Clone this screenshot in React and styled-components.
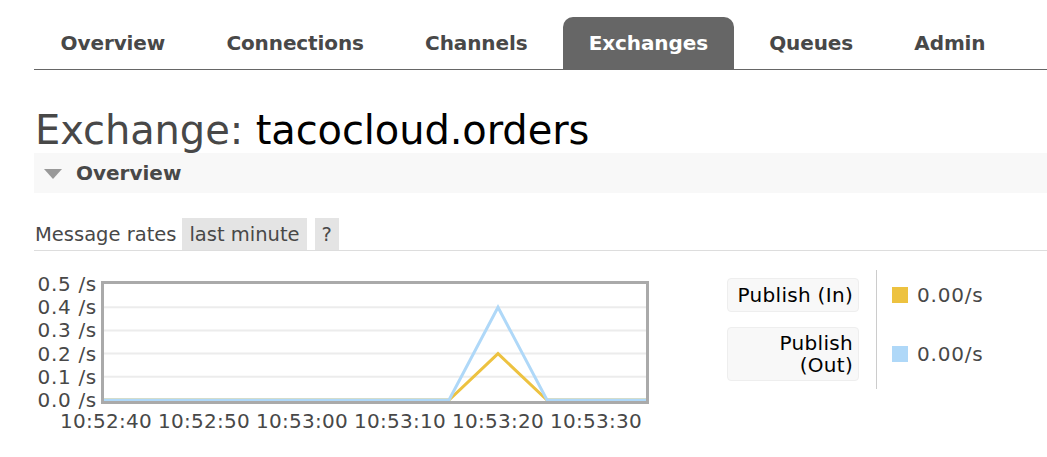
import React from "react";
import styled, { createGlobalStyle } from "styled-components";

const GlobalStyle = createGlobalStyle`
  html, body {
    margin: 0;
    padding: 0;
    background: #fff;
  }

  body {
    font-family: "DejaVu Sans", Verdana, sans-serif;
    color: #484848;
  }
`;

const Page = styled.div`
  width: 1047px;
  height: 457px;
  overflow: hidden;
  padding: 17px 0 0 34px;
  box-sizing: border-box;
`;

const Tabs = styled.ul`
  display: flex;
  gap: 10px;

  margin: 0;
  padding: 0 0 0 1px;

  list-style: none;
  border-bottom: 1px solid #666;
`;

const Tab = styled.li`
  display: flex;
  align-items: center;

  height: 52px;
  padding: 0 25.6px;

  border-radius: 10px 10px 0 0;

  font-size: 20px;
  font-weight: bold;
  letter-spacing: -0.1px;

  color: ${(props) => (props.$active ? "#fff" : "#484848")};
  background: ${(props) => (props.$active ? "#666" : "transparent")};
`;

const Title = styled.h1`
  margin: 38px 0 0 1px;

  font-size: 40px;
  font-weight: normal;
  line-height: 44px;
  letter-spacing: -0.1px;

  color: #484848;

  b {
    font-weight: normal;
    color: #000;
  }
`;

const SectionHeader = styled.div`
  display: flex;
  align-items: center;
  gap: 14px;

  height: 40px;
  margin-top: 1px;
  padding-left: 10px;

  font-size: 20px;
  font-weight: bold;

  background: #f8f8f8;
`;

const Arrow = styled.span`
  width: 0;
  height: 0;

  margin-top: 2px;

  border-left: 9px solid transparent;
  border-right: 9px solid transparent;
  border-top: 10px solid #999;
`;

const RatesRow = styled.div`
  display: flex;
  align-items: stretch;
  gap: 8px;

  height: 32px;
  margin-top: 25px;

  border-bottom: 1px solid #ddd;
  font-size: 19.5px;
`;

const RatesLabel = styled.span`
  display: flex;
  align-items: center;
  padding-left: 1px;
  margin-right: -2px;
`;

const Pill = styled.span`
  display: flex;
  align-items: center;
  padding: 0 7px;
  background: #e4e4e4;
`;

const ChartRow = styled.div`
  display: flex;
  align-items: flex-start;

  margin-top: 20px;
`;

const Legend = styled.div`
  display: grid;
  grid-template-columns: 132px 1fr;
  grid-template-rows: 34px 54px;
  row-gap: 15px;

  margin: 7px 0 0 63px;
  position: relative;

  &::after {
    content: "";
    position: absolute;
    left: 149px;
    top: -8px;
    bottom: -8px;
    border-left: 1px solid #ccc;
  }
`;

const SeriesName = styled.div`
  display: flex;
  flex-direction: column;
  align-items: flex-end;
  justify-content: center;

  padding: 0 5px;

  border: 1px solid #eee;
  border-radius: 4px;

  font-size: 20px;
  line-height: 22px;
  letter-spacing: 0.3px;
  text-align: right;
  color: #000;
  background: #f8f8f8;
`;

const SeriesValue = styled.div`
  display: flex;
  align-items: center;
  gap: 9px;

  padding-left: 33px;

  font-size: 20px;
  letter-spacing: 0.8px;
`;

const Swatch = styled.span`
  width: 16px;
  height: 16px;
  background: ${(props) => props.$color};
`;

const yTicks = ["0.5", "0.4", "0.3", "0.2", "0.1", "0.0"];
const xTicks = ["10:52:40", "10:52:50", "10:53:00", "10:53:10", "10:53:20", "10:53:30"];

function RateChart() {
  const left = 104;
  const right = 646;
  const top = 283;
  const bottom = 399;
  const step = (bottom - top) / 5;

  const y = (v) => bottom - (v / 0.5) * (bottom - top);

  return (
    <svg width="630" height="170" viewBox="34 270 630 170">
      {[1, 2, 3, 4].map((i) => (
        <line key={i} x1={left} x2={right} y1={top + i * step} y2={top + i * step} stroke="#ececec" strokeWidth="2" />
      ))}

      {yTicks.map((t, i) => (
        <text
          key={t}
          x="97"
          y={top + i * step + 7}
          textAnchor="end"
          fontSize="20"
          letterSpacing="0.7"
          fontFamily="DejaVu Sans, sans-serif"
          fill="#484848"
        >
          {t} /s
        </text>
      ))}

      {xTicks.map((t, i) => (
        <text
          key={t}
          x={106 + i * 98}
          y="427"
          textAnchor="middle"
          fontSize="20"
          letterSpacing="0.3"
          fontFamily="DejaVu Sans, sans-serif"
          fill="#484848"
        >
          {t}
        </text>
      ))}

      <polyline
        points={`${left},${y(0)} 449,${y(0)} 498,${y(0.2)} 547,${y(0)} ${right},${y(0)}`}
        fill="none"
        stroke="#edc240"
        strokeWidth="3"
      />
      <polyline
        points={`${left},${y(0)} 449,${y(0)} 498,${y(0.4)} 547,${y(0)} ${right},${y(0)}`}
        fill="none"
        stroke="#afd8f8"
        strokeWidth="3"
      />

      <rect x="102.5" y="281.5" width="545" height="120" fill="none" stroke="#aaa" strokeWidth="3" />
    </svg>
  );
}

export default function App() {
  const tabs = ["Overview", "Connections", "Channels", "Exchanges", "Queues", "Admin"];

  return (
    <>
      <GlobalStyle />
      <Page>
        <Tabs>
          {tabs.map((t) => (
            <Tab key={t} $active={t === "Exchanges"}>
              {t}
            </Tab>
          ))}
        </Tabs>

        <Title>
          Exchange: <b>tacocloud.orders</b>
        </Title>

        <SectionHeader>
          <Arrow />
          Overview
        </SectionHeader>

        <RatesRow>
          <RatesLabel>Message rates</RatesLabel>
          <Pill>last minute</Pill>
          <Pill>?</Pill>
        </RatesRow>

        <ChartRow>
          <RateChart />

          <Legend>
            <SeriesName>Publish (In)</SeriesName>
            <SeriesValue>
              <Swatch $color="#edc240" />
              0.00/s
            </SeriesValue>
            <SeriesName>
              <span>Publish</span>
              <span>(Out)</span>
            </SeriesName>
            <SeriesValue>
              <Swatch $color="#afd8f8" />
              0.00/s
            </SeriesValue>
          </Legend>
        </ChartRow>
      </Page>
    </>
  );
}
